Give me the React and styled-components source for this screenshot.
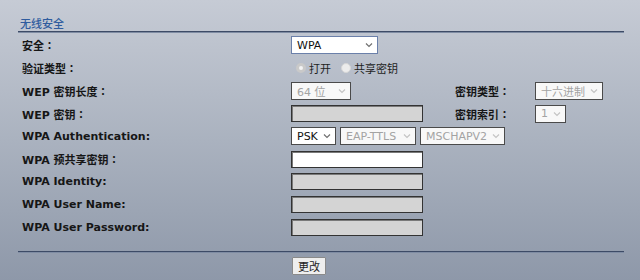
import styled, { createGlobalStyle } from "styled-components";

const GlobalStyle = createGlobalStyle`
  html, body {
    margin: 0;
    padding: 0;
  }
  body {
    width: 640px;
    height: 280px;
    overflow: hidden;
    background: linear-gradient(180deg, #c6cbd5 0%, #aab2bf 50%, #8e98a9 100%);
    font-family: "DejaVu Sans", "Noto Sans CJK JP", sans-serif;
  }
`;

const FONT = `"DejaVu Sans", "Noto Sans CJK JP", sans-serif`;
const CJK = `"Noto Sans CJK SC", sans-serif`;

const Page = styled.div`
  width: 606px;
  padding: 16px 0 0 18px;
`;

const Title = styled.div`
  padding-left: 2px;
  height: 15px;
  font: 500 11px ${CJK};
  line-height: 15px;
  color: #2f5c9e;
`;

const Rule = styled.div`
  height: 0;
  border-top: 1px solid #3d4b66;
  border-bottom: 1px solid #7f8ca3;
  margin-top: ${(p) => p.$top || 0}px;
`;

const Form = styled.div`
  display: grid;
  grid-template-columns: 269px 164px 80px auto;
  grid-auto-rows: 22.75px;
  margin: 1px 0 0 4px;
  align-items: center;
`;

const Label = styled.div`
  font: bold 11px ${FONT};
  color: #161616;
  white-space: nowrap;
`;

const Control = styled.div`
  display: flex;
  align-items: center;
  gap: ${(p) => p.$gap || 0}px;
  grid-column: ${(p) => p.$span || "auto"};
`;

const Box = styled.div`
  box-sizing: border-box;
  display: flex;
  align-items: center;
  justify-content: space-between;
  width: ${(p) => p.$w}px;
  height: 18px;
  padding: 0 4px 0 5px;
  background: ${(p) => (p.$disabled ? "#f8f8f8" : "#ffffff")};
  border: 1px solid ${(p) => (p.$focus ? "#6b80aa" : "#4a4a4a")};
  color: ${(p) => (p.$disabled ? "#a3a3a3" : "#111")};
  font: 11px ${FONT};
  white-space: nowrap;
`;

const Field = styled.div`
  box-sizing: border-box;
  width: 132px;
  height: 17px;
  background: ${(p) => (p.$disabled ? "#d4d4d4" : "#ffffff")};
  border: 1px solid #333;
  box-shadow: inset 1px 1px 0 #7a7a7a;
`;

const RadioGroup = styled.div`
  display: flex;
  align-items: center;
  padding-left: 5px;
  gap: 10px;
`;

const RadioItem = styled.label`
  display: flex;
  align-items: center;
  gap: 3px;
  font: 11px ${CJK};
  color: #1e1e1e;
`;

const Dot = styled.span`
  box-sizing: border-box;
  width: 10px;
  height: 10px;
  border-radius: 50%;
  background: ${(p) => (p.$checked ? "#f4f4f4" : "#ececec")};
  border: ${(p) => (p.$checked ? "3px solid #c9c9c9" : "1px solid #d6d6d6")};
`;

const Footer = styled.div`
  padding: 3px 0 0 274px;
`;

const Button = styled.button`
  box-sizing: border-box;
  width: 34px;
  height: 18px;
  padding: 0;
  background: #eeeeee;
  border: 1px solid #8a8a8a;
  border-radius: 1px;
  font: 11px ${CJK};
  color: #222;
`;

const Chevron = ({ disabled }) => (
  <svg width="8" height="6" viewBox="0 0 8 6">
    <path
      d="M1 1.5 L4 4.5 L7 1.5"
      fill="none"
      stroke={disabled ? "#c4c4c4" : "#707070"}
      strokeWidth="1.2"
    />
  </svg>
);

const Select = ({ w, value, disabled, focus }) => (
  <Box $w={w} $disabled={disabled} $focus={focus}>
    <span>{value}</span>
    <Chevron disabled={disabled} />
  </Box>
);

export default function App() {
  return (
    <>
      <GlobalStyle />
      <Page>
        <Title>无线安全</Title>
        <Rule />
        <Form>
          <Label>安全：</Label>
          <Control $span="2 / 5">
            <Select w={87} value="WPA" focus />
          </Control>

          <Label>验证类型：</Label>
          <Control $span="2 / 5">
            <RadioGroup>
              <RadioItem>
                <Dot $checked />
                打开
              </RadioItem>
              <RadioItem>
                <Dot />
                共享密钥
              </RadioItem>
            </RadioGroup>
          </Control>

          <Label>WEP 密钥长度：</Label>
          <Control>
            <Select w={60} value="64 位" disabled />
          </Control>
          <Label>密钥类型：</Label>
          <Control>
            <Select w={68} value="十六进制" disabled />
          </Control>

          <Label>WEP 密钥：</Label>
          <Control>
            <Field $disabled />
          </Control>
          <Label>密钥索引：</Label>
          <Control>
            <Select w={31} value="1" disabled />
          </Control>

          <Label>WPA Authentication:</Label>
          <Control $span="2 / 5" $gap={4}>
            <Select w={45} value="PSK" />
            <Select w={76} value="EAP-TTLS" disabled />
            <Select w={85} value="MSCHAPV2" disabled />
          </Control>

          <Label>WPA 预共享密钥：</Label>
          <Control $span="2 / 5">
            <Field />
          </Control>

          <Label>WPA Identity:</Label>
          <Control $span="2 / 5">
            <Field $disabled />
          </Control>

          <Label>WPA User Name:</Label>
          <Control $span="2 / 5">
            <Field $disabled />
          </Control>

          <Label>WPA User Password:</Label>
          <Control $span="2 / 5">
            <Field $disabled />
          </Control>
        </Form>
        <Rule $top={12} />
        <Footer>
          <Button>更改</Button>
        </Footer>
      </Page>
    </>
  );
}
